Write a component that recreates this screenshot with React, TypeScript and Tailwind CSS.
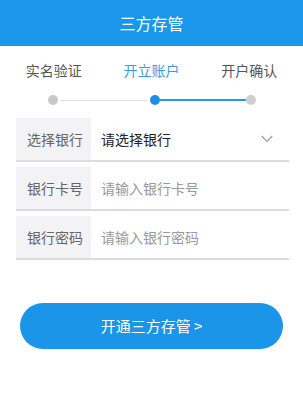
import React from "react";

const font = { fontFamily: '"Noto Sans CJK SC", "Noto Sans", sans-serif' };

function Row({ label, children }: { label: string; children: React.ReactNode }) {
  return (
    <div className="ml-4 mr-[14px] flex h-[44px] border-b-2 border-[#dcdcdc]">
      <div className="flex w-[75px] items-center bg-[#f3f3f5] pl-[11px] text-[14px] text-[#666]">{label}</div>
      <div className="flex flex-1 items-center pl-[10px] text-[14px]">{children}</div>
    </div>
  );
}

export default function App() {
  return (
    <div className="flex h-[394px] w-[303px] flex-col bg-white" style={font}>
      <div className="flex h-[46px] items-center justify-center bg-[#1a96ea] text-[16px] text-white">三方存管</div>
      <div className="mt-[14px] grid h-[20px] grid-cols-3 items-center px-[5px] text-[14px] leading-[20px]">
        <div className="text-center text-[#555]">实名验证</div>
        <div className="text-center text-[#3a9be2]">开立账户</div>
        <div className="text-center text-[#555]">开户确认</div>
      </div>
      <div className="mt-[15px] flex h-[10px] items-center pl-[48px] pr-[47px]">
        <div className="h-[10px] w-[10px] rounded-full bg-[#c9c9c9]" />
        <div className="mx-[3px] h-px flex-1 bg-[#dedede]" />
        <div className="h-[10px] w-[10px] rounded-full bg-[#1a8fe3]" />
        <div className="h-[2px] flex-1 bg-[#2b97e0]" />
        <div className="h-[10px] w-[10px] rounded-full bg-[#cfcfcf]" />
      </div>
      <div className="mt-[13px] flex flex-col gap-[5px]">
        <Row label="选择银行">
          <div className="flex flex-1 items-center justify-between pr-[16px]">
            <span className="text-[#222]">请选择银行</span>
            <svg width="12" height="8" viewBox="0 0 12 8" fill="none">
              <path d="M0.8 1 L6 6.5 L11.2 1" stroke="#9a9a9a" strokeWidth="1.2" />
            </svg>
          </div>
        </Row>
        <Row label="银行卡号">
          <span className="text-[#999]">请输入银行卡号</span>
        </Row>
        <Row label="银行密码">
          <span className="text-[#999]">请输入银行密码</span>
        </Row>
      </div>
      <div className="mx-auto mt-[43px] flex h-[46px] w-[263px] items-center justify-center rounded-full bg-[#1a95e8] text-[15px] text-white">
        开通三方存管 &gt;
      </div>
    </div>
  );
}
